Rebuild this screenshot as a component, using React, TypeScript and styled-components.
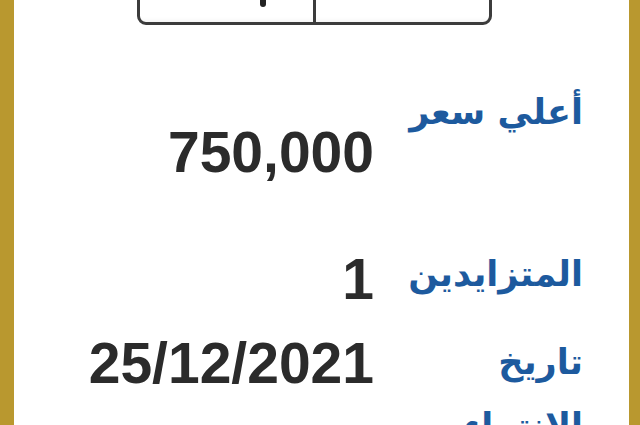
import React from "react";
import styled, { createGlobalStyle } from "styled-components";

const Global = createGlobalStyle`
  html, body { margin: 0; padding: 0; background: #ffffff; }
  body { width: 640px; height: 425px; overflow: hidden; }
`;

const Frame = styled.div`
  box-sizing: border-box;
  width: 640px;
  height: 425px;
  overflow: hidden;
  background: #ffffff;
  border-left: 14px solid #b9982f;
  border-right: 11px solid #b9982f;
`;

const ButtonGroup = styled.div`
  display: flex;
  box-sizing: border-box;
  width: 355px;
  height: 46px;
  margin: -21px 0 0 123px;
  border: 3px solid #3c3c3c;
  border-radius: 9px;
  overflow: hidden;
  background: #ffffff;
`;

const GroupButton = styled.div<{ $divider?: boolean }>`
  position: relative;
  flex: 1;
  border-right: ${(p) => (p.$divider ? "3px solid #3c3c3c" : "none")};
  box-shadow: inset 0 -6px 6px -6px rgba(0, 0, 0, 0.08);
`;

const Mark = styled.span`
  position: absolute;
  left: 120px;
  top: 18px;
  width: 6px;
  height: 7px;
  border-radius: 0 0 3px 3px;
  background: #222;
`;

const List = styled.div`
  direction: rtl;
  display: flex;
  flex-direction: column;
  padding: 0 46px 0 0;
  margin-top: 55px;
`;

const Row = styled.div<{ $h: number }>`
  display: grid;
  grid-template-columns: 180px auto;
  column-gap: 29px;
  height: ${(p) => p.$h}px;
`;

const Label = styled.div<{ $top: number }>`
  font-family: "DejaVu Sans", "Noto Sans", sans-serif;
  font-weight: bold;
  font-size: 35px;
  line-height: 64px;
  color: #1d5a9e;
  text-align: right;
  padding-top: ${(p) => p.$top}px;
`;

const Value = styled.div<{ $top: number }>`
  direction: ltr;
  text-align: right;
  font-family: "Liberation Sans", Arial, sans-serif;
  font-weight: bold;
  font-size: 57px;
  line-height: 64px;
  color: #2b2b2b;
  padding-top: ${(p) => p.$top}px;
  justify-self: start;
`;

export default function App() {
  return (
    <>
      <Global />
      <Frame>
        <ButtonGroup>
          <GroupButton $divider>
            <Mark />
          </GroupButton>
          <GroupButton />
        </ButtonGroup>
        <List>
          <Row $h={162}>
            <Label $top={0}>أعلي سعر</Label>
            <Value $top={40}>750,000</Value>
          </Row>
          <Row $h={86}>
            <Label $top={0}>المتزايدين</Label>
            <Value $top={5}>1</Value>
          </Row>
          <Row $h={140}>
            <Label $top={2}>تاريخ الانتهاء</Label>
            <Value $top={3}>25/12/2021</Value>
          </Row>
        </List>
      </Frame>
    </>
  );
}
